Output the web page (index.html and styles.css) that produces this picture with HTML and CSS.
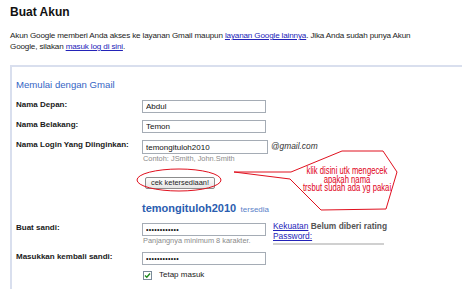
FILE: index.html
```html
<!DOCTYPE html>
<html lang="id">
<head>
    <meta charset="UTF-8" />
    <title>Buat Akun</title>
    <link rel="stylesheet" href="styles.css">
</head>
<body>
    <div class="page">
        <h1>Buat Akun</h1>
        <p class="intro">Akun Google memberi Anda akses ke layanan Gmail maupun <a href="#">layanan Google lainnya</a>. Jika Anda sudah punya Akun Google, silakan <a href="#">masuk log di sini</a>.</p>

        <div class="signup-box">
            <h2>Memulai dengan Gmail</h2>

            <div class="form-row">
                <label>Nama Depan:</label>
                <div class="field"><input class="text-input" type="text" value="Abdul"></div>
            </div>

            <div class="form-row">
                <label>Nama Belakang:</label>
                <div class="field"><input class="text-input" type="text" value="Temon"></div>
            </div>

            <div class="form-row">
                <label>Nama Login Yang Diinginkan:</label>
                <div class="field">
                    <div class="login-line">
                        <input class="text-input login-input" type="text" value="temongituloh2010">
                        <span class="domain">@gmail.com</span>
                    </div>
                    <div class="hint">Contoh: JSmith, John.Smith</div>
                    <button class="check-button" type="button">cek ketersediaan!</button>
                    <div class="available"><b>temongituloh2010</b> <span>tersedia</span></div>
                </div>
            </div>

            <div class="form-row password-row">
                <label>Buat sandi:</label>
                <div class="field field-split">
                    <div>
                        <input class="text-input" type="password" value="abcdefghijkl">
                        <div class="hint">Panjangnya minimum 8 karakter.</div>
                    </div>
                    <div class="strength">
                        <div><a href="#">Kekuatan</a> <b>Belum diberi rating</b></div>
                        <div><a href="#">Password:</a></div>
                        <div class="strength-bar"></div>
                    </div>
                </div>
            </div>

            <div class="form-row">
                <label>Masukkan kembali sandi:</label>
                <div class="field">
                    <input class="text-input" type="password" value="abcdefghijkl">
                    <div class="stay">
                        <span class="checkbox">
                            <svg width="7" height="7" viewBox="0 0 7 7"><path d="M1 3.5 L2.8 5.3 L6 1.5" fill="none" stroke="#1f8a1f" stroke-width="1.4"/></svg>
                        </span>
                        Tetap masuk
                    </div>
                </div>
            </div>
        </div>
    </div>

    <!-- coretan merah di atas screenshot -->
    <svg class="annotation" width="462" height="289" viewBox="0 0 462 289">
        <ellipse cx="179" cy="180" rx="42" ry="11" fill="none" stroke="#e0101e" stroke-width="1"/>
        <polygon points="234,172 291,172 342,151 383,151 397,172 386,209 321,210 290,179" fill="none" stroke="#e0101e" stroke-width="1"/>
    </svg>
    <div class="callout-note">
        <div>klik disini utk mengecek</div>
        <div>apakah nama</div>
        <div>trsbut sudah ada yg pakai</div>
    </div>
</body>
</html>
```

FILE: styles.css
```css
* {
    margin: 0;
    padding: 0;
    box-sizing: border-box;
}

body {
    font-family: "Liberation Sans", Arial, sans-serif;
    color: #222;
    background: #fff;
    overflow: hidden;
    width: 462px;
    height: 289px;
    position: relative;
}

.page {
    padding: 5px 0 0 10px;
}

h1 {
    font-size: 12px;
    font-weight: bold;
    line-height: 15px;
    color: #111;
}

a {
    color: #2323b8;
    text-decoration: underline;
}

.intro {
    margin-top: 10px;
    font-size: 8.1px;
    letter-spacing: -0.15px;
    line-height: 11px;
    width: 414px;
}

.signup-box {
    margin-top: 13px;
    width: 470px;
    height: 224px;
    border-top: 2px solid #d9dfee;
    border-left: 2px solid #d9dfee;
    padding: 12px 0 0 4px;
}

h2 {
    font-size: 9.6px;
    font-weight: normal;
    line-height: 12px;
    color: #3565c4;
    margin-bottom: 9px;
}

.form-row {
    display: grid;
    grid-template-columns: 126px 1fr;
    margin-bottom: 7px;
}

.form-row label {
    font-size: 8px;
    font-weight: bold;
    line-height: 10px;
    color: #1a1a1a;
}

.text-input {
    display: block;
    width: 124px;
    height: 13px;
    border: 1px solid #a5acb5;
    font-family: "Liberation Sans", Arial, sans-serif;
    font-size: 8px;
    padding: 0 3px;
    color: #111;
    background: #fff;
    outline: none;
}

.text-input[type="password"] {
    font-size: 7px;
    letter-spacing: 0.3px;
}

.login-line {
    display: flex;
    align-items: center;
    gap: 3px;
}

.login-input {
    width: 126px;
    height: 14px;
}

.domain {
    font-size: 8.4px;
    font-style: italic;
    color: #333;
    margin-top: -3px;
}

.hint {
    font-size: 7.4px;
    line-height: 10px;
    color: #8a8a8a;
    padding-left: 1px;
}

.check-button {
    display: block;
    margin: 13px 0 0 3px;
    width: 70px;
    height: 12px;
    border: 1px solid #8c8c8c;
    border-radius: 2px;
    background: linear-gradient(#ffffff, #e6e6e6);
    font-family: "Liberation Sans", Arial, sans-serif;
    font-size: 7.4px;
    line-height: 10px;
    color: #222;
}

.available {
    margin-top: 11px;
    line-height: 13px;
    color: #2a5db0;
}

.available b {
    font-size: 11px;
}

.available span {
    font-size: 8px;
    color: #5a7fc8;
}

.password-row {
    margin-bottom: 6px;
}

.field-split {
    display: flex;
    gap: 7px;
}

.strength {
    font-size: 8.4px;
    line-height: 10px;
    margin-top: -2px;
}

.strength b {
    color: #555;
}

.strength-bar {
    margin-top: 2px;
    width: 111px;
    height: 2px;
    background: #d0d0d0;
}

.stay {
    display: flex;
    align-items: center;
    gap: 7px;
    margin-top: 5px;
    padding-left: 1px;
    font-size: 8px;
    line-height: 10px;
    color: #222;
}

.checkbox {
    display: flex;
    align-items: center;
    justify-content: center;
    width: 9px;
    height: 9px;
    border: 1px solid #7a8a99;
    background: #fff;
}

.annotation {
    position: absolute;
    top: 0;
    left: 0;
    pointer-events: none;
}

.callout-note {
    position: absolute;
    left: 287px;
    top: 167px;
    width: 120px;
    text-align: center;
    font-size: 10px;
    line-height: 8.6px;
    color: #e0001a;
    transform: scaleX(0.77);
    transform-origin: 60px 0;
}
```
